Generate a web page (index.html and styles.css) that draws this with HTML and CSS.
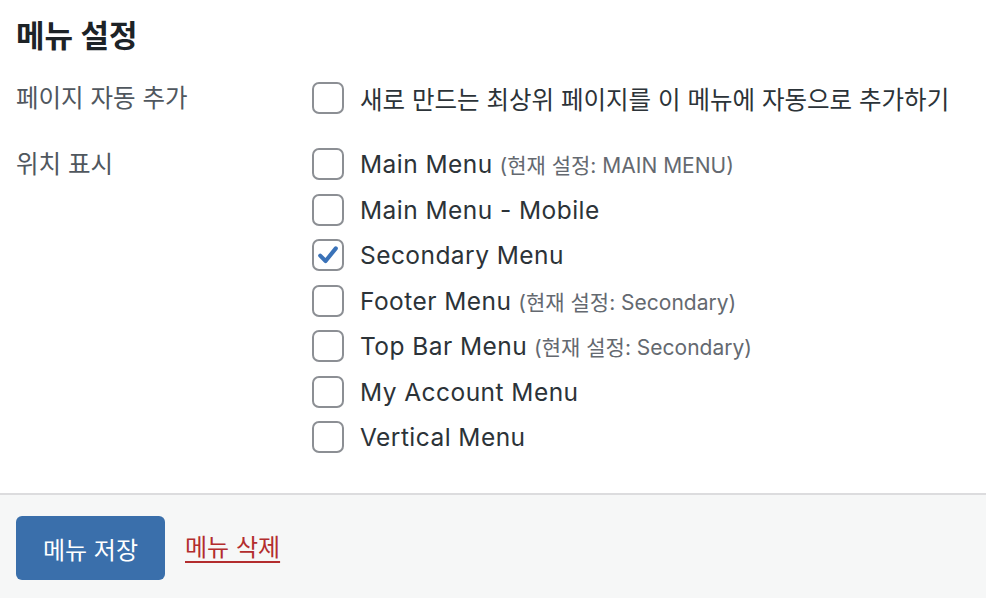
FILE: index.html
```html
<!DOCTYPE html>
<html lang="ko">
<head>
  <meta charset="UTF-8">
  <title>메뉴 설정</title>
  <link rel="stylesheet" href="styles.css">
</head>
<body>
  <div class="menu-settings">
    <h2 class="settings-title">메뉴 설정</h2>

    <div class="settings-row">
      <div class="row-label">페이지 자동 추가</div>
      <div class="row-options">
        <label class="option">
          <span class="box"></span>
          <span class="option-text">새로 만드는 최상위 페이지를 이 메뉴에 자동으로 추가하기</span>
        </label>
      </div>
    </div>

    <div class="settings-row locations">
      <div class="row-label">위치 표시</div>
      <div class="row-options">
        <label class="option">
          <span class="box"></span>
          <span class="option-text"><span class="name">Main Menu</span> <span class="current">(현재 설정: MAIN MENU)</span></span>
        </label>
        <label class="option">
          <span class="box"></span>
          <span class="option-text"><span class="name">Main Menu - Mobile</span></span>
        </label>
        <label class="option">
          <span class="box checked">
            <svg viewBox="0 0 20 20" width="24" height="24"><path d="M3.5 10.5 L8 15 L16.5 4.5" fill="none" stroke="#3a72b8" stroke-width="3.4" stroke-linecap="round" stroke-linejoin="round"/></svg>
          </span>
          <span class="option-text"><span class="name">Secondary Menu</span></span>
        </label>
        <label class="option">
          <span class="box"></span>
          <span class="option-text"><span class="name">Footer Menu</span> <span class="current">(현재 설정: Secondary)</span></span>
        </label>
        <label class="option">
          <span class="box"></span>
          <span class="option-text"><span class="name">Top Bar Menu</span> <span class="current">(현재 설정: Secondary)</span></span>
        </label>
        <label class="option">
          <span class="box"></span>
          <span class="option-text"><span class="name">My Account Menu</span></span>
        </label>
        <label class="option">
          <span class="box"></span>
          <span class="option-text"><span class="name">Vertical Menu</span></span>
        </label>
      </div>
    </div>
  </div>

  <div class="settings-footer">
    <button class="save-btn">메뉴 저장</button>
    <a href="#" class="delete-link">메뉴 삭제</a>
  </div>
</body>
</html>
```

FILE: styles.css
```css
body {
  margin: 0;
  background: #fff;
  font-family: "Inter", "Noto Sans CJK KR", sans-serif;
  color: #2c3338;
}

.menu-settings {
  padding: 16px 16px 0;
  height: 477px;
}

.settings-title {
  margin: 0 0 22px;
  font-size: 31px;
  font-weight: 700;
  color: #1d2327;
  line-height: 40px;
}

.settings-row {
  display: flex;
}

.locations {
  margin-top: 26px;
}

.row-label {
  width: 296px;
  flex-shrink: 0;
  font-size: 24.5px;
  color: #50575e;
  line-height: 40px;
}

.row-options {
  display: flex;
  flex-direction: column;
  gap: 5.5px;
}

.option {
  display: flex;
  align-items: center;
  height: 40px;
  cursor: pointer;
}

.box {
  width: 28px;
  height: 28px;
  border: 2px solid #8c8f94;
  border-radius: 7px;
  margin-right: 16px;
  display: flex;
  align-items: center;
  justify-content: center;
  background: #fff;
}

.option-text {
  font-size: 24.5px;
  color: #2c3338;
}

/* 라틴 글자는 조금 넓게 */
.name {
  letter-spacing: 0.45px;
}

.current {
  font-size: 21px;
  color: #646970;
}

.settings-footer {
  border-top: 2px solid #dcdcde;
  background: #f6f7f7;
  height: 117px;
  padding: 21px 16px 0;
  display: flex;
  align-items: flex-start;
  gap: 20px;
  box-sizing: border-box;
}

.save-btn {
  width: 149px;
  height: 64px;
  background: #3a6fab;
  color: #fff;
  border: none;
  border-radius: 6px;
  font-family: inherit;
  font-size: 24px;
}

.delete-link {
  color: #b32d2e;
  font-size: 24px;
  line-height: 64px;
  text-decoration: underline;
  text-underline-offset: 5px;
  text-decoration-thickness: 2px;
}
```
